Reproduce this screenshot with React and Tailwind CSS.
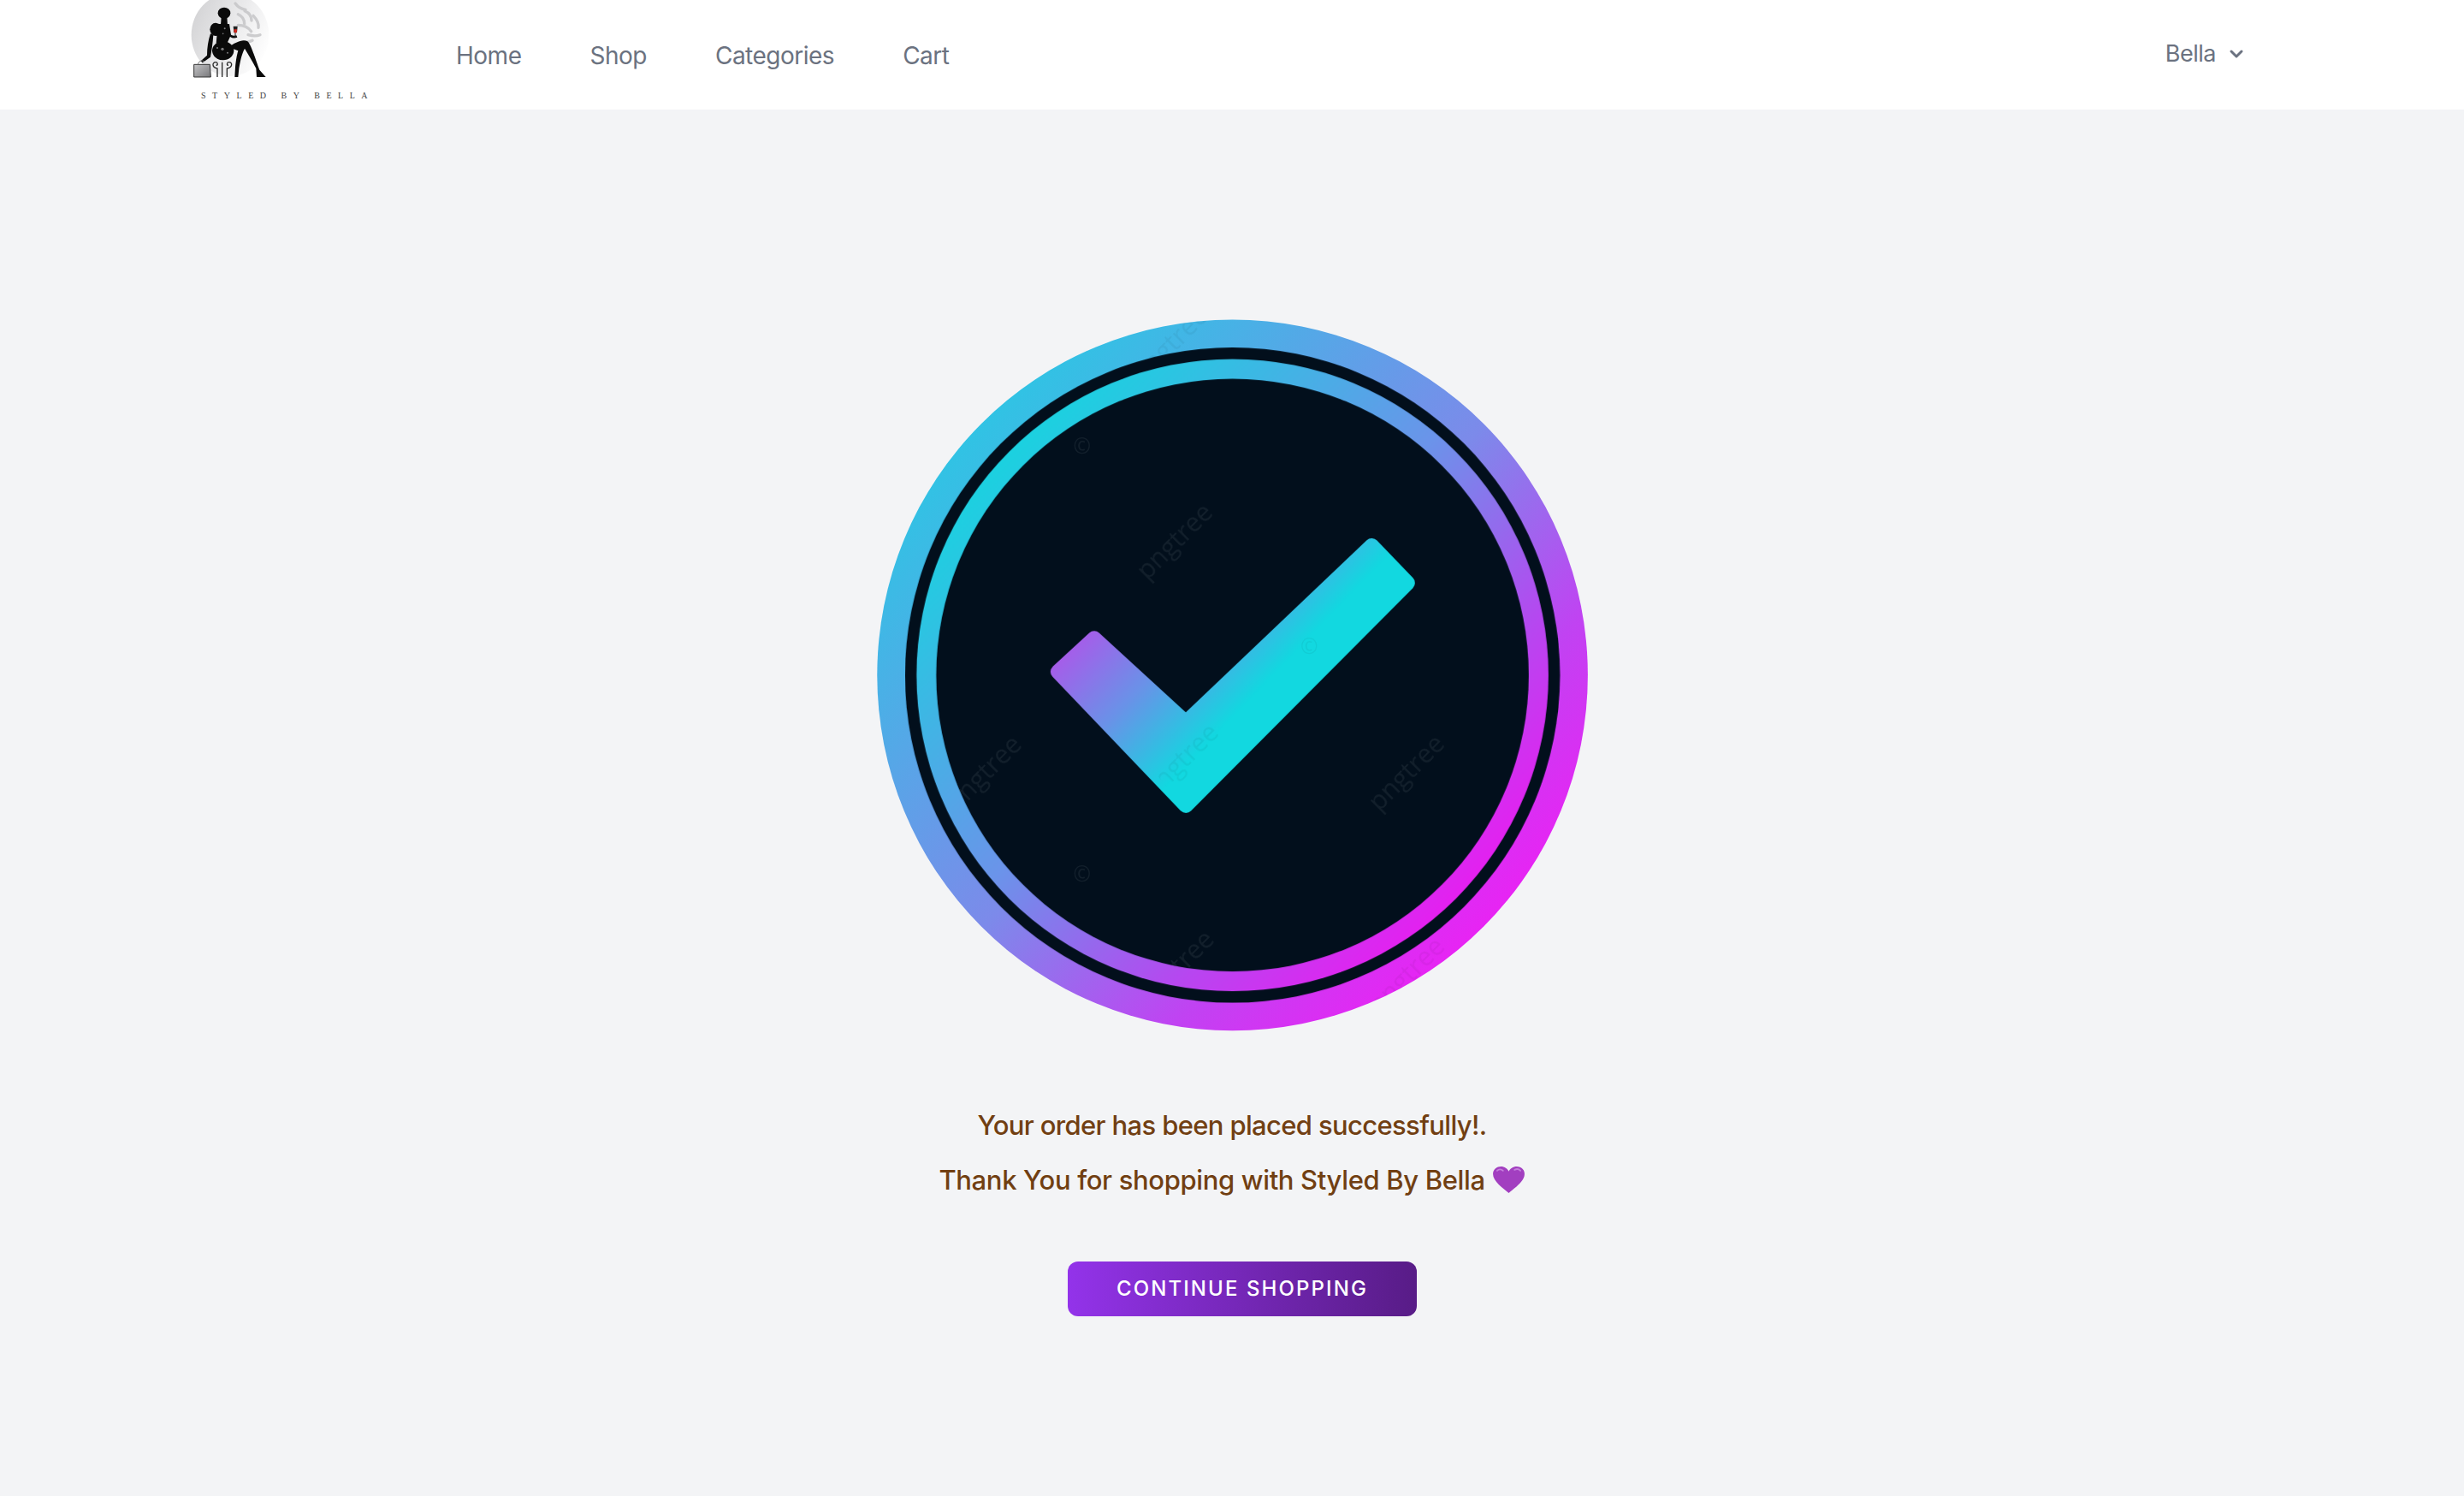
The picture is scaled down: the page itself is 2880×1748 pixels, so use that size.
import React from "react";
import { ChevronDown } from "lucide-react";

const navigation = ["Home", "Shop", "Categories", "Cart"];

const FONT = "'Open Sans', sans-serif";

const diskMarks = [
  { x: 678, y: 517 },
  { x: 1160, y: 998 },
  { x: 280, y: 1000 },
  { x: 680, y: 1405 },
];

const ringMarks = [
  { x: 668, y: 108 },
  { x: 1160, y: 1420 },
];

const Mark = ({ x, y }) => (
  <text x={x} y={y} fontSize="54" fontFamily={FONT} textAnchor="middle" transform={`rotate(-45 ${x} ${y})`}>
    pngtree
  </text>
);

const Logo = () => (
  <svg viewBox="0 0 720 384" className="w-[240px] h-[128px] shrink-0">
    <defs>
      <linearGradient id="moon" x1="0" y1="0.2" x2="1" y2="0.7">
        <stop offset="0" stopColor="#d2d2d4" />
        <stop offset="0.6" stopColor="#eeeeef" />
        <stop offset="1" stopColor="#ffffff" />
      </linearGradient>
      <linearGradient id="bag" x1="0" y1="0" x2="1" y2="1">
        <stop offset="0" stopColor="#c4c4c6" />
        <stop offset="1" stopColor="#77777a" />
      </linearGradient>
    </defs>
    <ellipse cx="177" cy="122" rx="136" ry="145" fill="url(#moon)" />
    <g fill="none" stroke="#c6c6c8" strokeWidth="10" strokeLinecap="round" opacity="0.85">
      <path d="M195 12c10 14 22 20 36 22" />
      <path d="M228 38c14 6 24 18 24 34" />
      <path d="M205 50c14 6 22 18 22 34" />
      <path d="M258 55c12 12 20 26 18 42" />
      <path d="M205 88c20 0 36 8 46 22" />
      <path d="M240 122c14 4 28 6 42 0" />
      <path d="M215 150c16 0 28-2 40-8" />
    </g>
    <g fill="#0a0a0a">
      <ellipse cx="156" cy="46" rx="22" ry="20" />
      <path d="M146 60h20l2 28h-24z" />
      <ellipse cx="126" cy="103" rx="20" ry="23" />
      <path d="M134 84h40l6 38-14 30h-38z" />
      <ellipse cx="152" cy="178" rx="38" ry="33" />
      <path d="M170 165C195 150 220 135 238 145C250 155 265 205 280 245L302 270H270L268 240C255 215 240 190 228 170C215 195 212 220 208 240L205 270H193L195 235C198 210 200 195 205 178Z" />
      <path d="M108 118l10 4c-2 30-6 56-10 78l-28 20-6-6 22-20c0-26 4-52 12-76z" />
      <path d="M165 116l4-4c10 12 20 16 30 12l3 7c-14 6-27 1-37-15z" />
    </g>
    <g fill="#7d7d7f">
      <circle cx="158" cy="100" r="3" />
      <circle cx="152" cy="118" r="2.500" />
      <circle cx="150" cy="172" r="5" />
      <circle cx="132" cy="168" r="3" />
      <circle cx="168" cy="185" r="3" />
    </g>
    <path d="M188 92h15l-2 22h-11z" fill="#222" />
    <path d="M190 103h11l-1 12h-9z" fill="#d8261c" />
    <path d="M195 114v16" stroke="#222" strokeWidth="3" />
    <g fill="none" stroke="#2a2a2a" strokeWidth="4">
      <path d="M132 270v-30c-20-4-18-22-6-22 8 0 9 11 2 11" />
      <path d="M166 270v-30c20-4 20-22 7-22-8 0-9 11-2 11" />
      <path d="M149 270v-52" />
    </g>
    <path d="M50 270v-44h56l3 44z" fill="url(#bag)" stroke="#333" strokeWidth="3" />
    <path d="M64 226c2-10 12-18 24-10" fill="none" stroke="#777" strokeWidth="3" />
    <text x="75" y="345" fontFamily="'Liberation Serif', serif" fontSize="30" letterSpacing="22.6" fill="#444">
      STYLED BY BELLA
    </text>
  </svg>
);

const CHECK_PATH = "M421 775L497 705L688 880L1075 512L1150 590L688 1054Z";

const SuccessBadge = () => (
  <svg viewBox="0 0 1568 1568" className="w-[880px] h-[880px]">
    <defs>
      <linearGradient id="outerRing" gradientUnits="userSpaceOnUse" x1="250" y1="250" x2="1320" y2="1320">
        <stop offset="0" stopColor="#2fc4e4" />
        <stop offset="0.5" stopColor="#7c8aea" />
        <stop offset="0.78" stopColor="#c043f2" />
        <stop offset="1" stopColor="#ea22f4" />
      </linearGradient>
      <linearGradient id="innerRing" gradientUnits="userSpaceOnUse" x1="300" y1="300" x2="1290" y2="1290">
        <stop offset="0" stopColor="#18d4e0" />
        <stop offset="0.45" stopColor="#6b94ea" />
        <stop offset="0.75" stopColor="#b648f0" />
        <stop offset="1" stopColor="#ee18f0" />
      </linearGradient>
      <linearGradient id="checkFill" gradientUnits="userSpaceOnUse" x1="430" y1="720" x2="690" y2="970">
        <stop offset="0" stopColor="#ac58ea" />
        <stop offset="0.5" stopColor="#6a92e8" />
        <stop offset="1" stopColor="#12d8e0" />
      </linearGradient>
      <clipPath id="diskClip">
        <circle cx="785" cy="782" r="617" />
      </clipPath>
      <clipPath id="outerClip">
        <circle cx="785" cy="782" r="740" />
      </clipPath>
      <clipPath id="checkClip">
        <path d={CHECK_PATH} />
      </clipPath>
    </defs>
    <circle cx="785" cy="782" r="740" fill="url(#outerRing)" />
    <g clipPath="url(#outerClip)" fill="#000000" opacity="0.05">
      {ringMarks.map((mark) => (
        <Mark key={mark.x} {...mark} />
      ))}
    </g>
    <circle cx="785" cy="782" r="682" fill="#020f1c" />
    <circle cx="785" cy="782" r="658" fill="url(#innerRing)" />
    <circle cx="785" cy="782" r="617" fill="#020f1c" />
    <g clipPath="url(#diskClip)" fill="#ffffff" opacity="0.07">
      {diskMarks.map((mark) => (
        <Mark key={mark.x} {...mark} />
      ))}
      <text x="472" y="320" fontSize="44" textAnchor="middle" fontFamily={FONT}>©</text>
      <text x="472" y="1212" fontSize="44" textAnchor="middle" fontFamily={FONT}>©</text>
    </g>
    <path fill="url(#checkFill)" stroke="url(#checkFill)" strokeWidth="30" strokeLinejoin="round" d={CHECK_PATH} />
    <g clipPath="url(#checkClip)" fill="#000000" opacity="0.05">
      <Mark x={690} y={975} />
      <text x="945" y="738" fontSize="44" textAnchor="middle" fontFamily={FONT}>©</text>
    </g>
  </svg>
);

const PurpleHeart = () => (
  <svg viewBox="0 0 40 34" className="inline-block w-[39px] h-[33px] align-[-5px]">
    <path
      fill="#a23fc0"
      d="M20 33C13 27 1 19 1 10 1 4 6 1 10.500 1 15 1 18.500 3.500 20 7 21.500 3.500 25 1 29.500 1 34 1 39 4 39 10 39 19 27 27 20 33Z"
    />
    <path d="M6 6c2-2 5-2 7 0" fill="none" stroke="#c57fdc" strokeWidth="2" strokeLinecap="round" />
    <path d="M27 5c2-1 5-1 7 1" fill="none" stroke="#c57fdc" strokeWidth="2" strokeLinecap="round" />
  </svg>
);

const Header = () => (
  <header className="bg-white h-[128px] pl-[210px] pr-[254px] flex items-start overflow-hidden">
    <Logo />
    <nav className="flex gap-20 ml-[83px] pt-[46px] text-[28px] leading-[38px] text-[#6b7280] tracking-[-0.5px]">
      {navigation.map((item) => (
        <a key={item} href="#">{item}</a>
      ))}
    </nav>
    <div className="ml-auto flex items-center gap-[12px] pt-[45px] text-[27px] leading-[36px] text-[#6b7280] tracking-[-0.5px]">
      <span>Bella</span>
      <ChevronDown className="w-[24px] h-[24px]" strokeWidth={3} />
    </div>
  </header>
);

export default function App() {
  return (
    <div className="min-h-[1748px] bg-[#f3f4f6] font-['Inter',sans-serif]">
      <Header />
      <main className="flex flex-col items-center pt-[222px]">
        <SuccessBadge />
        <div className="mt-[53px] text-center text-[31px] leading-[64px] font-[550] text-[#713f12]">
          <p className="tracking-[-0.65px]">Your order has been placed successfully!.</p>
          <p className="tracking-[-0.35px]">Thank You for shopping with Styled By Bella <PurpleHeart /></p>
        </div>
        <button className="mt-[63px] ml-[24px] w-[408px] h-[64px] rounded-[12px] bg-linear-to-r from-[#9333ea] to-[#581c87] text-white text-[24px] font-medium tracking-[2.1px] uppercase">
          Continue Shopping
        </button>
      </main>
    </div>
  );
}
